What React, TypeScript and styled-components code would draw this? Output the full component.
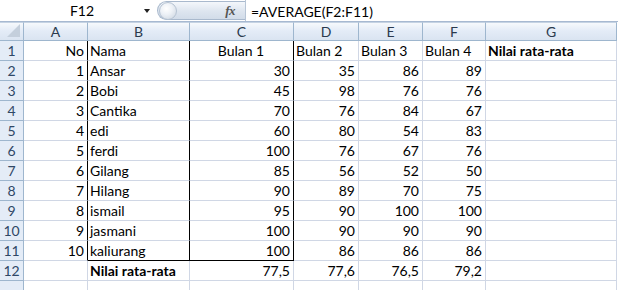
import React from "react";
import styled, { createGlobalStyle } from "styled-components";

const Global = createGlobalStyle`
  html, body { margin: 0; padding: 0; background: #ffffff; }
  body { font-family: Lato, "Open Sans", sans-serif; overflow: hidden; }
`;

const COLS = "24px 64px 102px 104px 65px 64px 63px 131px";

const Window = styled.div`
  width: 618px;
  height: 290px;
  overflow: hidden;
  background: #ffffff;
  display: flex;
  flex-direction: column;
`;

const FormulaBar = styled.div`
  height: 22px;
  display: flex;
  align-items: stretch;
  border-bottom: 1px solid #a7b9d1;
  box-sizing: border-box;
  background: #ffffff;
`;

const NameBox = styled.div`
  width: 157px;
  display: flex;
  align-items: center;
  font-size: 14px;
  color: #000;
`;

const NameText = styled.span`
  flex: 1;
  text-align: center;
  padding-left: 20px;
`;

const DropArrow = styled.span`
  width: 0;
  height: 0;
  border-left: 3.5px solid transparent;
  border-right: 3.5px solid transparent;
  border-top: 4px solid #222;
  margin-right: 7px;
  margin-top: 1px;
`;

const Capsule = styled.div`
  width: 88px;
  margin: 1px 0 1px 0;
  border: 1px solid #a9b9cd;
  border-right: none;
  border-radius: 11px 0 0 11px;
  background: linear-gradient(#f4f7fb, #dde5ef 55%, #d2dce9);
  display: flex;
  align-items: center;
  justify-content: space-between;
  box-sizing: border-box;
`;

const Knob = styled.div`
  width: 18px;
  height: 18px;
  border-radius: 50%;
  margin-left: 1px;
  background: radial-gradient(circle at 40% 35%, #ffffff 0%, #eef2f7 40%, #c9d3df 100%);
  border: 1px solid #b6c3d3;
  box-sizing: border-box;
`;

const Fx = styled.span`
  font-family: "Liberation Serif", serif;
  font-style: italic;
  font-weight: bold;
  font-size: 13px;
  color: #555;
  margin-right: 10px;
  letter-spacing: -0.5px;
`;

const FormulaInput = styled.div`
  flex: 1;
  display: flex;
  align-items: center;
  padding-left: 5px;
  padding-top: 1px;
  font-size: 14px;
  color: #000;
  border-left: 1px solid #b7c5d6;
`;

const Spacer = styled.div`
  height: 1px;
  background: #ffffff;
`;

const HeaderRow = styled.div`
  display: grid;
  grid-template-columns: ${COLS};
  height: 24px;
`;

const HeaderCell = styled.div`
  box-sizing: border-box;
  border-right: 1px solid #9eb6ce;
  border-bottom: 1px solid #9eb6ce;
  border-top: 1px solid #c5d3e3;
  background: linear-gradient(#f6f9fc, #e4ecf7 45%, #dae4f1);
  display: flex;
  align-items: center;
  justify-content: center;
  font-size: 14px;
  color: #2b3a4e;
  position: relative;
`;

const Corner = styled(HeaderCell)`
  &::after {
    content: "";
    position: absolute;
    right: 3px;
    bottom: 3px;
    width: 0;
    height: 0;
    border-left: 13px solid transparent;
    border-bottom: 13px solid #c4cfdc;
  }
`;

const Row = styled.div`
  display: grid;
  grid-template-columns: ${COLS};
  height: 20px;
  flex-shrink: 0;
`;

const RowHead = styled.div`
  box-sizing: border-box;
  border-right: 1px solid #9eb6ce;
  border-bottom: 1px solid #9eb6ce;
  background: #e4ecf7;
  display: flex;
  align-items: center;
  justify-content: center;
  font-size: 14px;
  color: #2f4766;
`;

const Cell = styled.div<{
  $align?: "left" | "right" | "center";
  $bold?: boolean;
  $blackRight?: boolean;
  $blackBottom?: boolean;
}>`
  box-sizing: border-box;
  border-right: 1px solid ${(p) => (p.$blackRight ? "#000" : "#d0d7e5")};
  border-bottom: 1px solid ${(p) => (p.$blackBottom ? "#000" : "#d0d7e5")};
  display: flex;
  align-items: center;
  justify-content: ${(p) =>
    p.$align === "right" ? "flex-end" : p.$align === "center" ? "center" : "flex-start"};
  padding: 0 3px 0 2px;
  font-size: 14px;
  font-weight: ${(p) => (p.$bold ? 700 : 400)};
  color: #000;
  white-space: nowrap;
  overflow: visible;
`;

type CellDef = { v: string; align?: "left" | "right" | "center"; bold?: boolean };

const students: [string, string, number, number, number, number][] = [
  ["1", "Ansar", 30, 35, 86, 89],
  ["2", "Bobi", 45, 98, 76, 76],
  ["3", "Cantika", 70, 76, 84, 67],
  ["4", "edi", 60, 80, 54, 83],
  ["5", "ferdi", 100, 76, 67, 76],
  ["6", "Gilang", 85, 56, 52, 50],
  ["7", "Hilang", 90, 89, 70, 75],
  ["8", "ismail", 95, 90, 100, 100],
  ["9", "jasmani", 100, 90, 90, 90],
  ["10", "kaliurang", 100, 86, 86, 86],
];

const rows: CellDef[][] = [
  [
    { v: "No", align: "right" },
    { v: "Nama" },
    { v: "Bulan 1", align: "center" },
    { v: "Bulan 2" },
    { v: "Bulan 3" },
    { v: "Bulan 4" },
    { v: "Nilai rata-rata", bold: true },
  ],
  ...students.map((s) => [
    { v: s[0], align: "right" as const },
    { v: s[1] },
    { v: String(s[2]), align: "right" as const },
    { v: String(s[3]), align: "right" as const },
    { v: String(s[4]), align: "right" as const },
    { v: String(s[5]), align: "right" as const },
    { v: "" },
  ]),
  [
    { v: "" },
    { v: "Nilai rata-rata", bold: true },
    { v: "77,5", align: "right" },
    { v: "77,6", align: "right" },
    { v: "76,5", align: "right" },
    { v: "79,2", align: "right" },
    { v: "" },
  ],
  [{ v: "" }, { v: "" }, { v: "" }, { v: "" }, { v: "" }, { v: "" }, { v: "" }],
];

const letters = ["A", "B", "C", "D", "E", "F", "G"];

export default function App() {
  return (
    <Window>
      <Global />
      <FormulaBar>
        <NameBox>
          <NameText>F12</NameText>
          <DropArrow />
        </NameBox>
        <Capsule>
          <Knob />
          <Fx>fx</Fx>
        </Capsule>
        <FormulaInput>=AVERAGE(F2:F11)</FormulaInput>
      </FormulaBar>
      <Spacer />
      <HeaderRow>
        <Corner />
        {letters.map((l) => (
          <HeaderCell key={l}>{l}</HeaderCell>
        ))}
      </HeaderRow>
      {rows.map((r, ri) => {
        const rowNum = ri + 1;
        const inBox = rowNum <= 11;
        return (
          <Row key={ri}>
            <RowHead>{rowNum <= 12 ? rowNum : ""}</RowHead>
            {r.map((c, ci) => (
              <Cell
                key={ci}
                $align={c.align}
                $bold={c.bold}
                $blackRight={inBox && ci <= 2}
                $blackBottom={rowNum === 11 && (ci === 1 || ci === 2)}
              >
                {c.v}
              </Cell>
            ))}
          </Row>
        );
      })}
    </Window>
  );
}
